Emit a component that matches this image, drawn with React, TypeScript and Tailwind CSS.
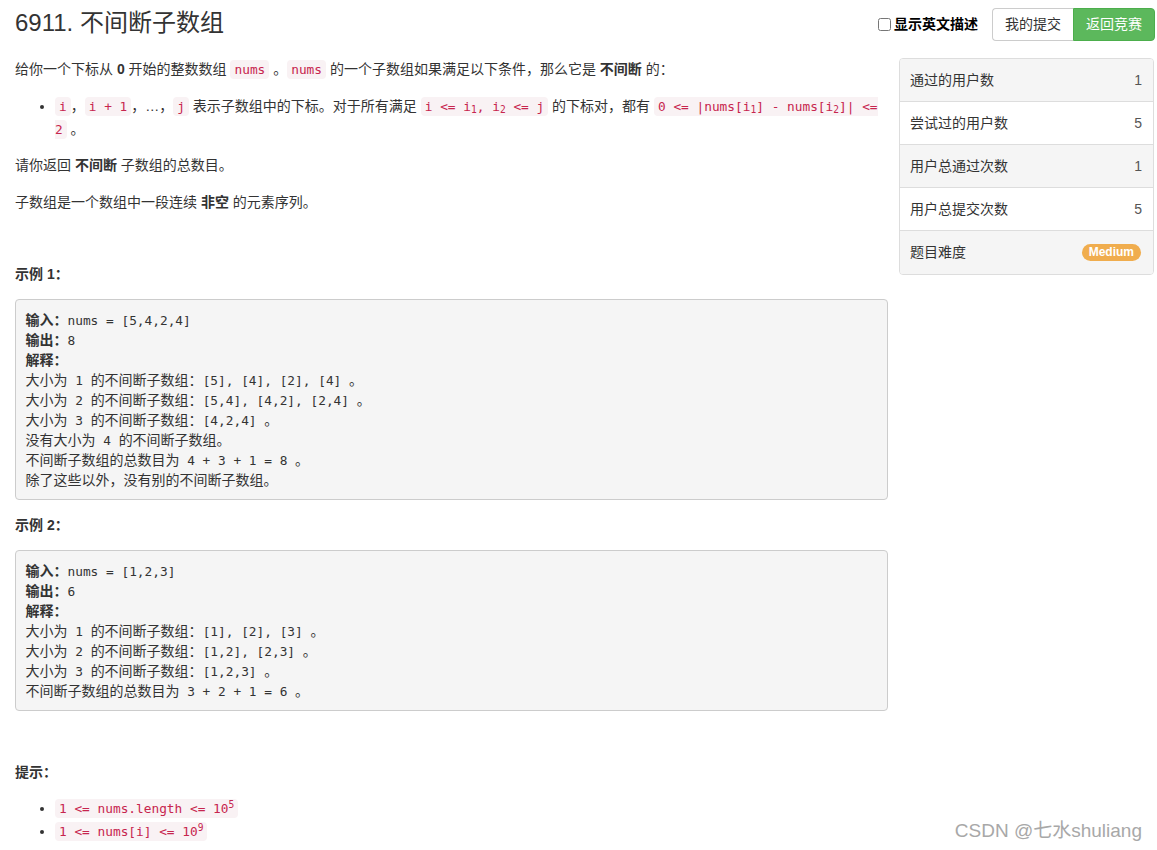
import React from "react";

const sans = "font-['Liberation_Sans','Noto_Sans_CJK_SC',sans-serif]";
const mono = "font-['DejaVu_Sans_Mono','Noto_Sans_CJK_SC',monospace]";

const Code = ({ children }: { children: React.ReactNode }) => (
  <code className={`${mono} text-[12.8px] text-[#c7254e] bg-[#f9f2f4] rounded-[4px] px-[4px] py-[2px]`}>
    {children}
  </code>
);

// ascii runs go in the mono font, CJK stays in the sans font
const mix = (s: string) =>
  s.split(/([\x20-\x7e]+)/).map((part, i) =>
    /[\x20-\x7e]/.test(part) ? (
      <span key={i} className={`${mono} text-[12.8px]`}>
        {part}
      </span>
    ) : (
      part
    )
  );

const stats: { label: string; value?: string }[] = [
  { label: "通过的用户数", value: "1" },
  { label: "尝试过的用户数", value: "5" },
  { label: "用户总通过次数", value: "1" },
  { label: "用户总提交次数", value: "5" },
  { label: "题目难度" },
];

const Line = ({ children }: { children: React.ReactNode }) => <div className="h-[20px]">{children}</div>;

const Example = ({ input, output, lines }: { input: string; output: string; lines: string[] }) => (
  <pre
    className={`${sans} text-[14px] leading-[20px] text-[#333] bg-[#f5f5f5] border border-[#ccc] rounded-[4px] p-[9.5px] whitespace-pre-wrap`}
  >
    <Line>
      <b>输入：</b>
      {mix(input)}
    </Line>
    <Line>
      <b>输出：</b>
      {mix(output)}
    </Line>
    <Line>
      <b>解释：</b>
    </Line>
    {lines.map((l) => (
      <Line key={l}>{mix(l)}</Line>
    ))}
  </pre>
);

const App = () => {
  return (
    <div className={`${sans} relative bg-white text-[#333] text-[14px] w-[1157px] h-[850px] overflow-hidden`}>
      {/* header */}
      <div className="flex justify-between items-start pl-[15px] pr-[2px] pt-[8px]">
        <h3 className="text-[24px] leading-[30px] text-[#333]">6911. 不间断子数组</h3>
        <div className="flex items-center">
          <label className="flex items-center gap-[3px] mr-[14px] font-bold text-[14px] text-black">
            <input type="checkbox" readOnly className="w-[13px] h-[13px] m-0" />
            显示英文描述
          </label>
          <div className="flex h-[33px] text-[14px]">
            <button className="w-[81px] border border-[#ccc] border-r-0 rounded-l-[4px] bg-white text-[#333]">
              我的提交
            </button>
            <button className="w-[82px] border border-[#4cae4c] rounded-r-[4px] bg-[#5cb85c] text-white">
              返回竞赛
            </button>
          </div>
        </div>
      </div>

      <div className="flex pl-[15px] pr-[3px] mt-[17px] gap-[11px]">
        {/* left column */}
        <div className="w-[873px] shrink-0">
          <p className="leading-[23px] mb-[13.5px]">
            给你一个下标从 <b>0</b> 开始的整数数组 <Code>nums</Code> 。<Code>nums</Code> 的一个子数组如果满足以下条件，那么它是{" "}
            <b>不间断</b> 的：
          </p>
          <ul className="list-disc pl-[40px] leading-[23px] mb-[13.5px]">
            <li>
              <Code>i</Code>，<Code>i + 1</Code>，…，<Code>j</Code> 表示子数组中的下标。对于所有满足{" "}
              <Code>
                i &lt;= i<sub>1</sub>, i<sub>2</sub> &lt;= j
              </Code>{" "}
              的下标对，都有{" "}
              <Code>
                0 &lt;= |nums[i<sub>1</sub>] - nums[i<sub>2</sub>]| &lt;=
                <br />2
              </Code>{" "}
              。
            </li>
          </ul>
          <p className="leading-[23px] mb-[13.5px]">
            请你返回 <b>不间断</b> 子数组的总数目。
          </p>
          <p className="leading-[23px]">
            子数组是一个数组中一段连续 <b>非空</b> 的元素序列。
          </p>

          <p className="mt-[50.5px] leading-[20px] font-bold text-[14px]">示例 1：</p>
          <div className="mt-[15px]">
            <Example
              input="nums = [5,4,2,4]"
              output="8"
              lines={[
                "大小为 1 的不间断子数组：[5], [4], [2], [4] 。",
                "大小为 2 的不间断子数组：[5,4], [4,2], [2,4] 。",
                "大小为 3 的不间断子数组：[4,2,4] 。",
                "没有大小为 4 的不间断子数组。",
                "不间断子数组的总数目为 4 + 3 + 1 = 8 。",
                "除了这些以外，没有别的不间断子数组。",
              ]}
            />
          </div>

          <p className="mt-[15px] leading-[20px] font-bold text-[14px]">示例 2：</p>
          <div className="mt-[15px]">
            <Example
              input="nums = [1,2,3]"
              output="6"
              lines={[
                "大小为 1 的不间断子数组：[1], [2], [3] 。",
                "大小为 2 的不间断子数组：[1,2], [2,3] 。",
                "大小为 3 的不间断子数组：[1,2,3] 。",
                "不间断子数组的总数目为 3 + 2 + 1 = 6 。",
              ]}
            />
          </div>

          <p className="mt-[51px] leading-[20px] font-bold text-[14px]">提示：</p>
          <ul className="list-disc pl-[40px] leading-[22px] mt-[15px]">
            <li>
              <Code>
                1 &lt;= nums.length &lt;= 10<sup>5</sup>
              </Code>
            </li>
            <li>
              <Code>
                1 &lt;= nums[i] &lt;= 10<sup>9</sup>
              </Code>
            </li>
          </ul>
        </div>

        {/* right column */}
        <div className="w-[255px] shrink-0">
          <div className="border border-[#ddd] rounded-[4px] overflow-hidden">
            {stats.map((s, i) => (
              <div
                key={s.label}
                className={`flex items-center justify-between h-[43px] pl-[10px] pr-[11px] ${
                  i % 2 === 0 ? "bg-[#f5f5f5]" : "bg-white"
                } ${i < stats.length - 1 ? "border-b border-[#ddd]" : ""}`}
              >
                <span>{s.label}</span>
                {s.value ? (
                  <span className="text-[#555]">{s.value}</span>
                ) : (
                  <span className="bg-[#f0ad4e] text-white font-bold text-[12px] leading-[17px] px-[7px] mr-[1px] rounded-full">
                    Medium
                  </span>
                )}
              </div>
            ))}
          </div>
        </div>
      </div>

      <div className="absolute right-[15px] bottom-[7px] text-[19px] leading-[24px] text-[#a8a8a8]">
        CSDN @七水shuliang
      </div>
    </div>
  );
};

export default App;
